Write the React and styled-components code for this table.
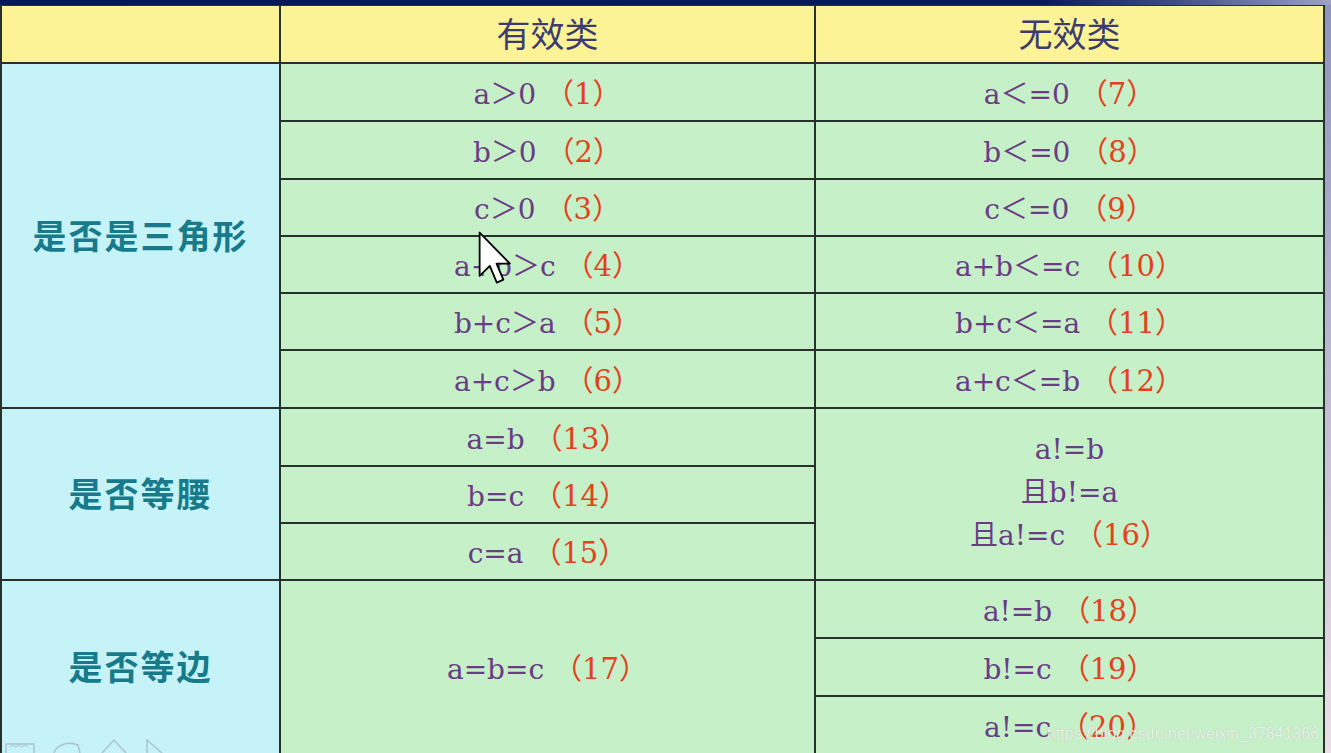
import React from 'react';
import styled, { createGlobalStyle } from 'styled-components';

const GlobalStyle = createGlobalStyle`
  html, body {
    margin: 0;
    padding: 0;
    overflow: hidden;
    background: #ecdfe7;
  }
`;

const latin = `"DejaVu Serif", "Noto Sans CJK SC", serif`;

const Frame = styled.div`
  position: relative;
  width: 1331px;
  height: 753px;
  overflow: hidden;
  background: linear-gradient(to bottom, #8e94bd 0%, #b9b6d0 45%, #ecdfe7 100%);
`;

const TopBar = styled.div`
  height: 5px;
  background: linear-gradient(to right, #03175a 0%, #06195c 78%, #3c4a86 88%, #9ea2c4 100%);
`;

const Table = styled.div`
  display: grid;
  width: 1325px;
  box-sizing: border-box;
  padding: 1px 2px 0 2px;
  gap: 2px;
  background: #28322d;
  grid-template-columns: 277px 533px 507px;
  grid-template-rows: 56px 56px 56px 55px 55px 55px 56px 56px 55px 55px 56px 56px 56px;
`;

const tones = {
  header: '#fcf396',
  label: '#c6f3f8',
  body: '#c6f0c8',
};

const Cell = styled.div`
  grid-row: span ${(p) => p.$rows || 1};
  background: ${(p) => tones[p.$tone || 'body']};
  display: flex;
  flex-direction: column;
  align-items: center;
  justify-content: center;
  white-space: nowrap;
  padding-bottom: 3px;
`;

const HeadText = styled.span`
  font-family: "Noto Sans CJK SC", sans-serif;
  font-size: 34px;
  color: #3d3c6e;
`;

const Label = styled.span`
  font-family: "Noto Sans CJK SC", sans-serif;
  font-weight: 700;
  font-size: 34px;
  color: #177b8c;
  letter-spacing: 2px;
`;

const Line = styled.div`
  font-family: ${latin};
  font-size: 28px;
  line-height: ${(p) => p.$lh || 'normal'};
  color: #6a3c86;
`;

const Num = styled.span`
  font-family: ${latin};
  font-size: 29px;
  color: #e3421c;
`;

const Cursor = styled.svg`
  position: absolute;
  left: 478px;
  top: 231px;
`;

const Watermark = styled.div`
  position: absolute;
  right: 12px;
  bottom: 10px;
  font-family: "Liberation Sans", Arial, sans-serif;
  font-size: 16px;
  color: rgba(255, 255, 255, 0.75);
  text-shadow: 0 0 1px rgba(120, 120, 120, 0.4);
`;

const SlideTools = styled.svg`
  position: absolute;
  left: 4px;
  bottom: 0;
  opacity: 0.45;
`;

const Expr = ({ text, num }) => (
  <Line>
    {text} <Num>{num}</Num>
  </Line>
);

const valid = [
  ['a＞0', '（1）'],
  ['b＞0', '（2）'],
  ['c＞0', '（3）'],
  ['a+b＞c', '（4）'],
  ['b+c＞a', '（5）'],
  ['a+c＞b', '（6）'],
];

const invalid = [
  ['a＜=0', '（7）'],
  ['b＜=0', '（8）'],
  ['c＜=0', '（9）'],
  ['a+b＜=c', '（10）'],
  ['b+c＜=a', '（11）'],
  ['a+c＜=b', '（12）'],
];

const isoValid = [
  ['a=b', '（13）'],
  ['b=c', '（14）'],
  ['c=a', '（15）'],
];

const eqInvalid = [
  ['a!=b', '（18）'],
  ['b!=c', '（19）'],
  ['a!=c', '（20）'],
];

export default function App() {
  return (
    <>
      <GlobalStyle />
      <Frame>
        <TopBar />
        <Table>
          <Cell $tone="header" />
          <Cell $tone="header">
            <HeadText>有效类</HeadText>
          </Cell>
          <Cell $tone="header">
            <HeadText>无效类</HeadText>
          </Cell>

          <Cell $tone="label" $rows={6}>
            <Label>是否是三角形</Label>
          </Cell>
          {valid.map(([t, n], i) => (
            <React.Fragment key={n}>
              <Cell>
                <Expr text={t} num={n} />
              </Cell>
              <Cell>
                <Expr text={invalid[i][0]} num={invalid[i][1]} />
              </Cell>
            </React.Fragment>
          ))}

          <Cell $tone="label" $rows={3}>
            <Label>是否等腰</Label>
          </Cell>
          <Cell>
            <Expr text={isoValid[0][0]} num={isoValid[0][1]} />
          </Cell>
          <Cell $rows={3}>
            <Line $lh="43px">a!=b</Line>
            <Line $lh="43px">且b!=a</Line>
            <Line $lh="43px">
              且a!=c <Num>（16）</Num>
            </Line>
          </Cell>
          {isoValid.slice(1).map(([t, n]) => (
            <Cell key={n}>
              <Expr text={t} num={n} />
            </Cell>
          ))}

          <Cell $tone="label" $rows={3}>
            <Label>是否等边</Label>
          </Cell>
          <Cell $rows={3}>
            <Expr text="a=b=c" num="（17）" />
          </Cell>
          {eqInvalid.map(([t, n]) => (
            <Cell key={n}>
              <Expr text={t} num={n} />
            </Cell>
          ))}
        </Table>

        <Cursor width="34" height="56" viewBox="0 0 13 21.5">
          <path
            d="M0.6 0.6 L0.6 17.2 L4.5 13.4 L7.2 19.8 L9.7 18.7 L7.1 12.5 L12.2 12.5 Z"
            fill="#fff"
            stroke="#000"
            strokeWidth="0.7"
            strokeLinejoin="round"
          />
        </Cursor>

        <SlideTools width="170" height="16" viewBox="0 0 170 16">
          <rect x="2" y="7" width="28" height="10" fill="none" stroke="#8a8fa0" strokeWidth="1.5" />
          <path d="M6 10 l3 -2 l3 2 l3 -2 l3 2 l3 -2 l3 2" fill="none" stroke="#8a8fa0" strokeWidth="1" />
          <path d="M50 16 C52 8 64 4 74 8 L76 16" fill="none" stroke="#8a8fa0" strokeWidth="1.5" />
          <path d="M98 16 L110 3 L122 16" fill="none" stroke="#8a8fa0" strokeWidth="1.5" />
          <path d="M143 16 L143 3 L158 16" fill="none" stroke="#8a8fa0" strokeWidth="1.5" />
        </SlideTools>

        <Watermark>https://blog.csdn.net/weixin_37841366</Watermark>
      </Frame>
    </>
  );
}
